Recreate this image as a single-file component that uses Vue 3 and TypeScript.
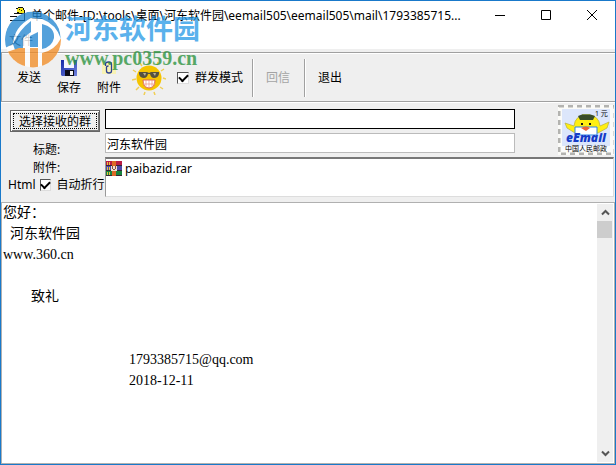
<script setup lang="ts">
import { ref } from 'vue'

const windowTitle = '单个邮件-[D:\\tools\\桌面\\河东软件园\\eemail505\\eemail505\\mail\\1793385715...'
const groupMode = ref(true)
const wrapLines = ref(true)
const recipients = ref('')
const subject = ref('河东软件园')
const attachments = ref<string[]>(['paibazid.rar'])

const pad = (n: number): string => ' '.repeat(n)
const body = ref(
  [
    '您好：',
    pad(2) + '河东软件园',
    'www.360.cn',
    '',
    pad(8) + '致礼',
    '',
    '',
    pad(36) + '1793385715@qq.com',
    pad(36) + '2018-12-11',
  ].join('\n'),
)
</script>

<template>
  <div class="window">
    <header class="titlebar">
      <svg class="app-icon" width="16" height="16" viewBox="0 0 16 16" shape-rendering="crispEdges">
        <path d="M7 1h7v2h1v4H7z" fill="#f4e81c" />
        <path d="M8 0h5v1H8zM6 1h2v1H6zM13 1h1v2h-1zM9 2h1v1H9zM11 3h1v1h-1zM7 5h2v1H7zM14 3h1v3h-1zM4 6h11v1H4zM0 9h7v1H0zM0 13h15v1H0zM14 7h1v7h-1z" fill="#111" />
      </svg>
      <h1 class="title">{{ windowTitle }}</h1>
      <div class="caption-buttons">
        <button type="button" aria-label="最小化">
          <svg width="10" height="10" viewBox="0 0 10 10"><path d="M0 5.500h10" stroke="#000" /></svg>
        </button>
        <button type="button" aria-label="最大化">
          <svg width="10" height="10" viewBox="0 0 10 10"><path d="M.5 .5h9v9h-9z" fill="none" stroke="#000" /></svg>
        </button>
        <button type="button" aria-label="关闭">
          <svg width="10" height="10" viewBox="0 0 10 10"><path d="M0 0l10 10M10 0L0 10" stroke="#000" /></svg>
        </button>
      </div>
    </header>

    <nav class="menubar"><button type="button">文件</button></nav>

    <div class="toolbar">
      <button type="button" class="tool send">发送</button>
      <button type="button" class="tool stacked">
        <svg width="16" height="16" viewBox="0 0 16 16">
          <defs>
            <linearGradient id="disk" x2="1" y2="1">
              <stop offset="0" stop-color="#1428a8" /><stop offset="1" stop-color="#7183dc" />
            </linearGradient>
          </defs>
          <path d="M0 0h16v16H1l-1-1z" fill="url(#disk)" />
          <path d="M3 0h10v8H3z" fill="#f4f5ff" /><path d="M4 10h9v6H4z" fill="#0b0b18" />
          <path d="M9 11h3v4H9z" fill="#f4f4f4" />
        </svg>
        <span>保存</span>
      </button>
      <button type="button" class="tool stacked">
        <svg width="16" height="16" viewBox="0 0 16 16">
          <path d="M1 2h14v12H1z" fill="#f8f3b4" />
          <path d="M4.500 6V4q0-2 3-2t3 2v7q0 2-2.500 2T5.500 11V7q0-1 2-1" fill="none" stroke="#2b3f94" stroke-width="1.300" />
        </svg>
        <span>附件</span>
      </button>
      <button type="button" class="tool sun" aria-label="表情">
        <svg width="34" height="34" viewBox="0 0 34 34">
          <path d="M17 0l1 3M26 1l-1 3M32 8l-3 2M34 18l-3-1M31 28l-3-2M23 34l-1-3M12 34l1-3M4 29l3-3M0 19l4-1M1 9l3 2M8 2l2 3" stroke="#f0cf55" stroke-width="1.500" />
          <circle cx="17" cy="17" r="12.500" fill="#f5c400" />
          <path d="M7 11h8l2 1 2-1h8v2q-1 4-5 4-3 0-4-4h-2q-1 4-4 4-4 0-5-4z" fill="#555140" />
          <path d="M11 12h3l-1 3zM21 12h3l-1 3z" fill="#bbb392" />
          <path d="M11 19h12q0 8-6 8t-6-8z" fill="#fff" stroke="#dc6558" />
          <path d="M11 23h12M14 19v7M17 19v8M20 19v7" stroke="#ed8f80" stroke-width=".7" />
        </svg>
      </button>
      <label class="check mode"><input v-model="groupMode" type="checkbox" />群发模式</label>
      <span class="divider" />
      <button type="button" class="tool reply" disabled>回信</button>
      <span class="divider" />
      <button type="button" class="tool quit">退出</button>
    </div>

    <section class="form">
      <div class="left">
        <button type="button" class="pick"><span>选择接收的群</span></button>
        <label for="subject" class="caption">标题:</label>
        <span id="files-label" class="caption">附件:</span>
        <label class="check wrap"><span>Html</span><input v-model="wrapLines" type="checkbox" />自动折行</label>
      </div>
      <div class="right">
        <div class="address">
          <div class="fields">
            <input v-model="recipients" class="recipients" type="text" aria-label="接收的群" />
            <input id="subject" v-model="subject" class="subject" type="text" />
          </div>
          <svg class="stamp" width="56" height="50" viewBox="0 0 56 50">
            <path d="M0 0h56v50H0z" fill="#fbfbf8" />
            <path d="M1 1h56v48H1z" fill="none" stroke="#b3b3b0" stroke-width="3" stroke-dasharray="5 4" />
            <path d="M4 4h48v37H4z" fill="#dce6fb" />
            <path d="M4 41h48v5H4z" fill="#f9fbff" />
            <path d="M7 18l9 3q1-11 13-11t13 11l9-4-2 6-9 5H17L9 23z" fill="#ffef12" stroke="#b5ae40" stroke-width=".7" />
            <path d="M20 11q8-4 17 0l-2 4H22z" fill="#394d29" />
            <path d="M24 10h8v-1h-8z" fill="#7b8d45" />
            <path d="M23 18h2v2h-2zM31 18h2v2h-2z" fill="#111" />
            <path d="M17 22h22v8H17z" fill="#fff" stroke="#2c83e5" />
            <path d="M23 23q5-3 9 0l-4 3z" fill="#ed6338" />
            <text x="28" y="37" text-anchor="middle" class="stamp-brand">eEmail</text>
            <text x="37" y="11" class="stamp-price">1 元</text>
            <text x="28" y="46" text-anchor="middle" class="stamp-foot">中国人民邮政</text>
          </svg>
        </div>
        <ul class="files" aria-labelledby="files-label">
          <li v-for="name in attachments" :key="name">
            <svg width="16" height="15" viewBox="0 0 16 15" shape-rendering="crispEdges">
              <path d="M0 0h16v5H0z" fill="#b91c45" /><path d="M0 5h16v5H0z" fill="#4c48aa" />
              <path d="M0 10h16v5H0z" fill="#16833d" /><path d="M0 4h16v1H0zM0 9h16v1H0zM0 14h16v1H0z" fill="#352435" />
              <path d="M1 1h1v3H1zM1 6h1v3H1zM1 11h1v3H1zM3 1h1v3H3zM3 6h1v3H3zM3 11h1v3H3z" fill="#e5c33f" />
              <path d="M6 0h4v15H6z" fill="#dc6825" /><path d="M5 5h6v5H5z" fill="#eee5d5" />
              <path d="M6 5h1v3H6zM9 5h1v3H9zM7 8h2v1H7z" fill="#8b4c40" />
            </svg>
            <span>{{ name }}</span>
          </li>
        </ul>
      </div>
    </section>

    <main class="editor">
      <textarea v-model="body" aria-label="正文" spellcheck="false" />
      <div class="scrollbar">
        <button type="button" aria-label="向上滚动">
          <svg width="9" height="7" viewBox="0 0 9 7"><path d="M1 5.500l3.500-3.500L8 5.500" fill="none" stroke="#555" stroke-width="2" /></svg>
        </button>
        <div class="track"><div class="thumb" /></div>
        <button type="button" aria-label="向下滚动">
          <svg width="9" height="7" viewBox="0 0 9 7"><path d="M1 1.500L4.500 5 8 1.500" fill="none" stroke="#555" stroke-width="2" /></svg>
        </button>
      </div>
    </main>

    <div class="watermark">
      <svg width="58" height="58" viewBox="0 0 58 58">
        <defs>
          <clipPath id="disc"><circle cx="29" cy="29.500" r="28" /></clipPath>
        </defs>
        <g clip-path="url(#disc)">
          <path d="M0 0h58v58H0z" fill="#fff" />
          <path d="M1 38Q-2 8 23 2 45-2 55 17L57 29Q52 14 38 9L27 8Q10 17 9 34z" fill="#1c82cf" />
          <path d="M9 34Q15 20 27 11v11l-8 6v10l-8 2zM26 26l8-4v15h-8z" fill="#1c82cf" />
          <path d="M38 14q13 3 12 14-2 9-12 11z" fill="#1c82cf" />
          <path d="M3 42l12-4v18Q5 50 3 42zM15 38h6v20h-6zM26 38h8v20h-8zM38 43q14-3 20-17 3 26-20 32z" fill="#f28a20" />
        </g>
      </svg>
      <div class="mark-text"><strong>河东软件园</strong><em>www.pc0359.cn</em></div>
    </div>
  </div>
</template>

<style>
body {
  margin: 0;
}
</style>

<style scoped>
* {
  box-sizing: border-box;
}
.window {
  position: relative;
  display: flex;
  flex-direction: column;
  min-height: 100vh;
  border: 1px solid #1979ca;
  background: #efefef;
  color: #000;
  font: 12px/16px 'Noto Sans', 'Noto Sans CJK SC', sans-serif;
}
button {
  padding: 0;
  border: 0;
  background: none;
  color: inherit;
  font: inherit;
}
svg {
  display: block;
  flex: none;
}
.titlebar {
  display: flex;
  align-items: center;
  height: 28px;
  padding-left: 9px;
  gap: 5px;
  background: #fff;
}
.title {
  flex: 1;
  min-width: 0;
  margin: 0;
  padding-top: 2px;
  overflow: hidden;
  font-size: 12px;
  font-weight: 400;
  white-space: nowrap;
}
.caption-buttons {
  display: flex;
}
.caption-buttons button {
  display: grid;
  place-items: center;
  width: 46px;
  height: 28px;
}
.menubar {
  display: flex;
  align-items: center;
  height: 20px;
  padding: 4px 8px 0;
  background: #fff;
}
.menubar button {
  color: #444;
}
.toolbar {
  display: flex;
  align-items: center;
  height: 50px;
  margin-top: 3px;
  padding-top: 2px;
  border: 1px solid #a0a0a0;
  border-right: 0;
  box-shadow: inset 0 1px #fff, 0 1px #fff;
}
.send {
  margin-left: 15px;
}
.stacked {
  display: flex;
  flex-direction: column;
  align-items: center;
  gap: 4px;
  margin-left: 16px;
}
.sun {
  margin-left: 11px;
}
.check {
  display: flex;
  align-items: center;
}
.check input {
  appearance: none;
  display: grid;
  place-items: center;
  width: 12px;
  height: 12px;
  margin: 0 6px 0 4px;
  border: 1px solid #555;
  border-right-color: #ddd;
  border-bottom-color: #ddd;
  background: #fff;
}
.check input:checked::before {
  content: '';
  width: 7px;
  height: 4px;
  margin-bottom: 2px;
  border: solid #000;
  border-width: 0 0 2px 2px;
  transform: rotate(-45deg);
}
.mode {
  margin-left: 7px;
}
.divider {
  width: 2px;
  height: 38px;
  margin: 0 12px 0 9px;
  border-left: 1px solid #a0a0a0;
  border-right: 1px solid #fff;
}
.reply {
  color: #a4a4a4;
}
.reply + .divider {
  margin-left: 14px;
}
.form {
  display: flex;
  gap: 1px;
  padding: 7px 1px 5px 4px;
}
.left {
  display: flex;
  flex-direction: column;
  width: 99px;
}
.pick {
  align-self: flex-start;
  width: 90px;
  height: 22px;
  margin: 1px 0 9px 5px;
  padding: 1px;
  border: 1px solid #666;
  box-shadow: inset 1px 1px #fff, inset -1px -1px #777;
}
.pick span {
  display: block;
  margin: 1px;
  height: 16px;
  border: 1px dotted #000;
  line-height: 16px;
}
.caption {
  width: 60px;
  height: 18px;
  padding-left: 28px;
  line-height: 18px;
}
.wrap {
  padding-left: 3px;
  white-space: nowrap;
}
.right {
  display: flex;
  flex: 1;
  flex-direction: column;
  gap: 2px;
  min-width: 0;
}
.address {
  display: flex;
  justify-content: space-between;
  margin-top: -4px;
}
.fields {
  display: flex;
  flex: 1;
  flex-direction: column;
  gap: 4px;
  margin-right: 43px;
  padding-top: 4px;
}
.fields input {
  width: 100%;
  height: 20px;
  padding: 2px 1px 0;
  border: 1px solid #000;
  outline: 0;
  background: #fff;
  font: inherit;
}
.fields .subject {
  border-color: #bbb;
}
.stamp-brand {
  font: italic 900 12px/12px 'Open Sans', sans-serif;
  fill: #153bc7;
}
.stamp-price {
  font: 7px 'Open Sans', 'Noto Sans CJK SC', sans-serif;
}
.stamp-foot {
  font: 7px 'Noto Sans CJK SC', sans-serif;
}
.files {
  height: 40px;
  margin: 0;
  padding: 1px 0;
  border: 1px solid #999;
  border-top: 2px solid #777;
  border-right-color: #ddd;
  border-bottom-color: #ddd;
  background: #fff;
  list-style: none;
}
.files li {
  display: flex;
  align-items: center;
  gap: 3px;
}
.files span {
  padding-top: 1px;
}
.editor {
  display: flex;
  flex: 1;
  border: 1px solid #b0b0b0;
  background: #fff;
}
.editor textarea {
  flex: 1;
  min-width: 0;
  margin-top: -1px;
  padding: 0 1px;
  overflow: hidden;
  border: 0;
  outline: 0;
  resize: none;
  background: transparent;
  color: #000;
  font: 14px/21px 'Liberation Serif', 'Noto Sans CJK SC', serif;
}
.scrollbar {
  display: flex;
  flex-direction: column;
  width: 16px;
  margin: 1px;
  background: #efefef;
}
.scrollbar button {
  display: grid;
  place-items: center;
  height: 17px;
}
.track {
  flex: 1;
}
.thumb {
  width: 15px;
  height: 17px;
  background: #cdcdcd;
}
.watermark {
  position: absolute;
  top: 9px;
  left: 3px;
  display: flex;
  gap: 3px;
  opacity: 0.75;
  pointer-events: none;
}
.mark-text {
  display: flex;
  flex-direction: column;
}
.mark-text strong {
  color: #2497e6;
  font-size: 27px;
  line-height: 38px;
}
.mark-text em {
  color: #249038;
  font: bold 20px/20px 'Liberation Serif', serif;
}
</style>
